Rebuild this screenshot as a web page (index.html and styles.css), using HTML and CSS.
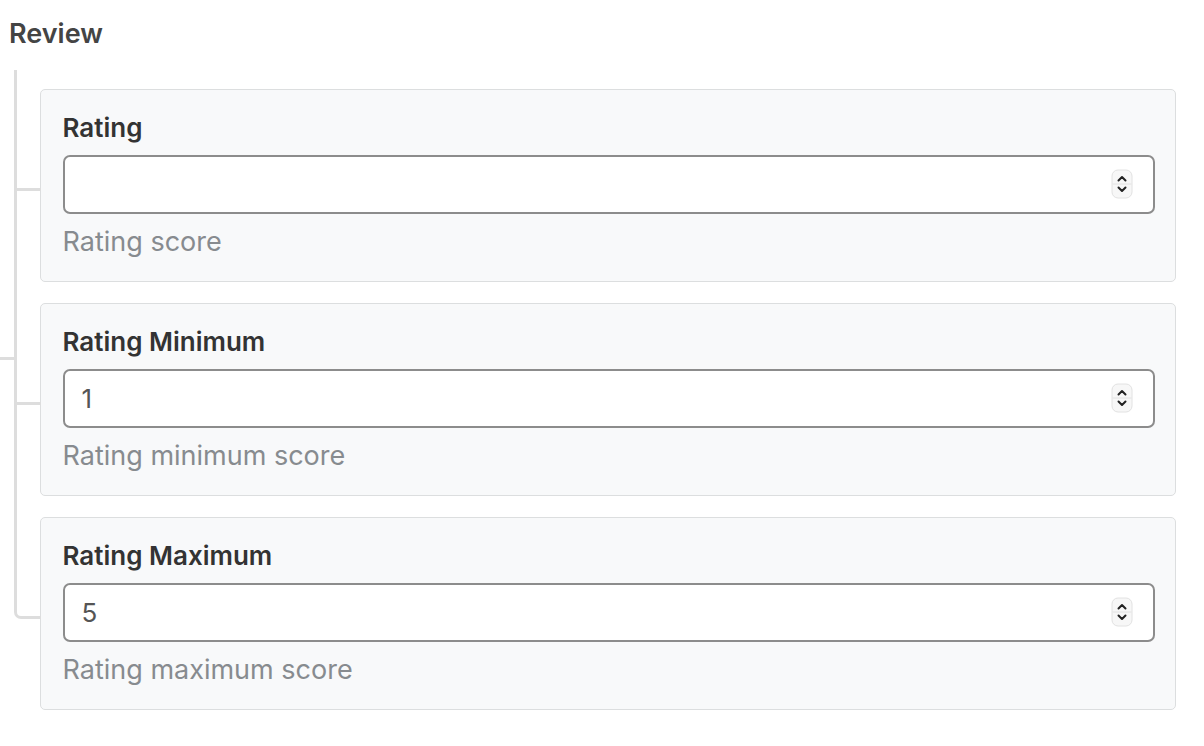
FILE: index.html
```html
<!DOCTYPE html>
<html>
<head>
<meta charset="utf-8">
<link rel="stylesheet" href="styles.css">
</head>
<body>
<div class="group">
  <h2 class="group-title">Review</h2>
  <div class="children">
    <div class="field-card">
      <label class="field-label">Rating</label>
      <div class="num-input">
        <span class="num-value"></span>
        <svg class="spinner" width="22" height="30" viewBox="0 0 22 30"><rect x="1" y="1" width="20" height="28" rx="6" fill="#f7f7f7" stroke="#e2e2e2"/><line x1="1.5" y1="15" x2="20.5" y2="15" stroke="#e2e2e2"/><path d="M7.5 11.5 L11 8 L14.5 11.5" fill="none" stroke="#222" stroke-width="2" stroke-linecap="round" stroke-linejoin="round"/><path d="M7.5 18.5 L11 22 L14.5 18.5" fill="none" stroke="#222" stroke-width="2" stroke-linecap="round" stroke-linejoin="round"/></svg>
      </div>
      <div class="field-help">Rating score</div>
    </div>
    <div class="field-card">
      <label class="field-label">Rating Minimum</label>
      <div class="num-input">
        <span class="num-value">1</span>
        <svg class="spinner" width="22" height="30" viewBox="0 0 22 30"><rect x="1" y="1" width="20" height="28" rx="6" fill="#f7f7f7" stroke="#e2e2e2"/><line x1="1.5" y1="15" x2="20.5" y2="15" stroke="#e2e2e2"/><path d="M7.5 11.5 L11 8 L14.5 11.5" fill="none" stroke="#222" stroke-width="2" stroke-linecap="round" stroke-linejoin="round"/><path d="M7.5 18.5 L11 22 L14.5 18.5" fill="none" stroke="#222" stroke-width="2" stroke-linecap="round" stroke-linejoin="round"/></svg>
      </div>
      <div class="field-help">Rating minimum score</div>
    </div>
    <div class="field-card">
      <label class="field-label">Rating Maximum</label>
      <div class="num-input">
        <span class="num-value">5</span>
        <svg class="spinner" width="22" height="30" viewBox="0 0 22 30"><rect x="1" y="1" width="20" height="28" rx="6" fill="#f7f7f7" stroke="#e2e2e2"/><line x1="1.5" y1="15" x2="20.5" y2="15" stroke="#e2e2e2"/><path d="M7.5 11.5 L11 8 L14.5 11.5" fill="none" stroke="#222" stroke-width="2" stroke-linecap="round" stroke-linejoin="round"/><path d="M7.5 18.5 L11 22 L14.5 18.5" fill="none" stroke="#222" stroke-width="2" stroke-linecap="round" stroke-linejoin="round"/></svg>
      </div>
      <div class="field-help">Rating maximum score</div>
    </div>
  </div>
</div>
</body>
</html>
```
FILE: styles.css
```css
html, body {
  margin: 0;
  padding: 0;
  background: #ffffff;
  font-family: Inter, "Noto Sans", "Liberation Sans", sans-serif;
}

.group {
  position: relative;
  padding: 16px 28px 0 9px;
}

.group::before {
  content: "";
  position: absolute;
  left: 0;
  top: 357px;
  width: 14px;
  height: 3px;
  background: #dddddd;
}

.group-title {
  margin: 0;
  font-size: 27px;
  line-height: 36px;
  font-weight: 600;
  color: #444444;
}

.children {
  margin-top: 37px;
  padding-left: 31px;
  display: flex;
  flex-direction: column;
  gap: 21px;
}

.field-card {
  position: relative;
  background: #f8f9fa;
  border: 1.5px solid #dcdedf;
  border-radius: 5px;
  padding: 21.5px 20px 23.5px 21.5px;
}

.field-card::before {
  content: "";
  position: absolute;
  left: -27.5px;
  top: -20px;
  width: 24px;
  height: calc(50% + 22.5px);
  border-left: 3px solid #dddddd;
  border-bottom: 3px solid #dddddd;
}

.field-card:last-child::before {
  border-bottom-left-radius: 7px;
}

.field-card:not(:last-child)::after {
  content: "";
  position: absolute;
  left: -27.5px;
  top: 50%;
  bottom: -23px;
  width: 3px;
  background: #dddddd;
}

.field-label {
  display: block;
  font-size: 26px;
  line-height: 32px;
  font-weight: 600;
  color: #333333;
  margin-bottom: 11px;
}

.num-input {
  display: flex;
  align-items: center;
  justify-content: space-between;
  height: 59px;
  box-sizing: border-box;
  border: 2px solid #8c8c8c;
  border-radius: 7px;
  background: #ffffff;
  padding: 0 20px 0 17px;
}

.num-value {
  font-size: 26px;
  color: #555555;
}

.spinner {
  display: block;
  flex: none;
}

.field-help {
  margin-top: 12px;
  font-size: 27px;
  line-height: 32px;
  color: #878b8f;
}
```
